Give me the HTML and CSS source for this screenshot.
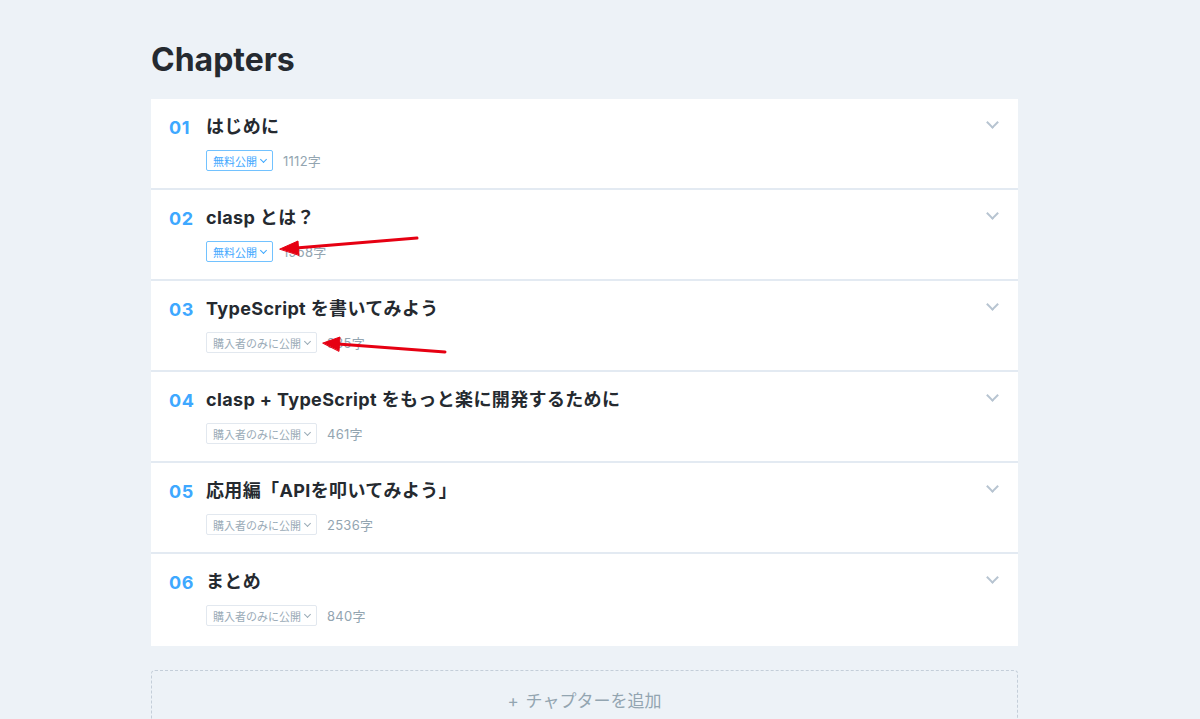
FILE: index.html
```html
<!DOCTYPE html>
<html lang="ja">
  <head>
    <meta charset="UTF-8" />
    <meta name="viewport" content="width=device-width, initial-scale=1.0" />
    <title>Chapters</title>
    <link rel="stylesheet" href="styles.css">
  </head>
  <body>
    <div class="chapters">
      <h2 class="chapters-title">Chapters</h2>

      <ul class="chapter-list">
        <li class="chapter">
          <span class="chapter-num">01</span>
          <div class="chapter-body">
            <div class="chapter-name">はじめに</div>
            <div class="chapter-meta">
              <span class="badge badge-free">無料公開<i class="caret"></i></span>
              <span class="chapter-count">1112字</span>
            </div>
          </div>
          <span class="chapter-toggle"></span>
        </li>

        <li class="chapter">
          <span class="chapter-num">02</span>
          <div class="chapter-body">
            <div class="chapter-name">clasp とは？</div>
            <div class="chapter-meta">
              <span class="badge badge-free">無料公開<i class="caret"></i></span>
              <span class="chapter-count">1958字</span>
            </div>
          </div>
          <span class="chapter-toggle"></span>
        </li>

        <li class="chapter">
          <span class="chapter-num">03</span>
          <div class="chapter-body">
            <div class="chapter-name">TypeScript を書いてみよう</div>
            <div class="chapter-meta">
              <span class="badge">購入者のみに公開<i class="caret"></i></span>
              <span class="chapter-count">935字</span>
            </div>
          </div>
          <span class="chapter-toggle"></span>
        </li>

        <li class="chapter">
          <span class="chapter-num">04</span>
          <div class="chapter-body">
            <div class="chapter-name">clasp + TypeScript をもっと楽に開発するために</div>
            <div class="chapter-meta">
              <span class="badge">購入者のみに公開<i class="caret"></i></span>
              <span class="chapter-count">461字</span>
            </div>
          </div>
          <span class="chapter-toggle"></span>
        </li>

        <li class="chapter">
          <span class="chapter-num">05</span>
          <div class="chapter-body">
            <div class="chapter-name">応用編「APIを叩いてみよう」</div>
            <div class="chapter-meta">
              <span class="badge">購入者のみに公開<i class="caret"></i></span>
              <span class="chapter-count">2536字</span>
            </div>
          </div>
          <span class="chapter-toggle"></span>
        </li>

        <li class="chapter">
          <span class="chapter-num">06</span>
          <div class="chapter-body">
            <div class="chapter-name">まとめ</div>
            <div class="chapter-meta">
              <span class="badge">購入者のみに公開<i class="caret"></i></span>
              <span class="chapter-count">840字</span>
            </div>
          </div>
          <span class="chapter-toggle"></span>
        </li>
      </ul>

      <button class="btn-add">+ チャプターを追加</button>
    </div>

    <!-- red annotation arrows drawn over the screenshot -->
    <svg class="annotations" width="1200" height="719" viewBox="0 0 1200 719">
      <g fill="#e60012" stroke="#e60012" stroke-width="3" stroke-linecap="round">
        <line x1="417" y1="238" x2="296" y2="248" />
        <polygon points="280,249 298,241 299,255" stroke-width="1" />
        <line x1="445" y1="352" x2="338" y2="344" />
        <polygon points="323,343 340,337 339,351" stroke-width="1" />
      </g>
    </svg>
  </body>
</html>
```

FILE: styles.css
```css
* {
  margin: 0;
  padding: 0;
  box-sizing: border-box;
}

body {
  font-family: Inter, "Noto Sans CJK JP", sans-serif;
  background: #edf2f7;
  color: #222;
  height: 100vh;
  overflow: hidden;
}

.chapters {
  width: 867px;
  margin-left: 151px;
  padding-top: 40px;
}

.chapters-title {
  font-size: 32px;
  font-weight: 700;
  line-height: 40px;
  color: #252a30;
  margin-bottom: 19px;
}

.chapter-list {
  list-style: none;
  background: #fff;
}

.chapter {
  display: flex;
  align-items: flex-start;
  height: 91px;
  padding: 16px 18px 0 18px;
  border-bottom: 2px solid #e3eaf2;
}

.chapter:last-child {
  height: 92px;
  border-bottom: none;
}

.chapter-num {
  width: 37px;
  font-size: 18px;
  font-weight: 700;
  line-height: 24px;
  letter-spacing: 0.04em;
  color: #3ea8ff;
  padding-top: 1px;
}

.chapter-body {
  flex: 1;
}

.chapter-name {
  font-size: 18px;
  font-weight: 700;
  line-height: 24px;
  letter-spacing: 0.02em;
  color: #252a30;
}

.chapter-meta {
  display: flex;
  align-items: center;
  margin-top: 11px;
}

.badge {
  display: inline-flex;
  align-items: center;
  height: 21px;
  padding: 0 4px 0 6px;
  font-size: 11px;
  color: #9aabb7;
  border: 1px solid #e2e8ef;
  border-radius: 2px;
  font-family: "Noto Sans CJK JP", sans-serif;
}

.badge-free {
  color: #3ea8ff;
  border-color: #72c2ff;
}

.caret {
  display: inline-block;
  width: 5px;
  height: 5px;
  margin: -3px 2px 0 4px;
  border-right: 1.3px solid currentColor;
  border-bottom: 1.3px solid currentColor;
  transform: rotate(45deg);
}

.chapter-count {
  margin-left: 10px;
  font-size: 13px;
  letter-spacing: 0.02em;
  color: #93a5b1;
}

.chapter-toggle {
  width: 9px;
  height: 9px;
  margin: 3px 3px 0 0;
  border-right: 2px solid #b7c4d1;
  border-bottom: 2px solid #b7c4d1;
  transform: rotate(45deg);
}

.btn-add {
  display: block;
  width: 100%;
  height: 58px;
  margin-top: 24px;
  background: none;
  border: 1px dashed #c4ced9;
  border-radius: 4px;
  font-family: Inter, "Noto Sans CJK JP", sans-serif;
  font-size: 17px;
  word-spacing: 2px;
  color: #93a5b1;
  cursor: pointer;
}

.annotations {
  position: absolute;
  top: 0;
  left: 0;
  pointer-events: none;
}
```
